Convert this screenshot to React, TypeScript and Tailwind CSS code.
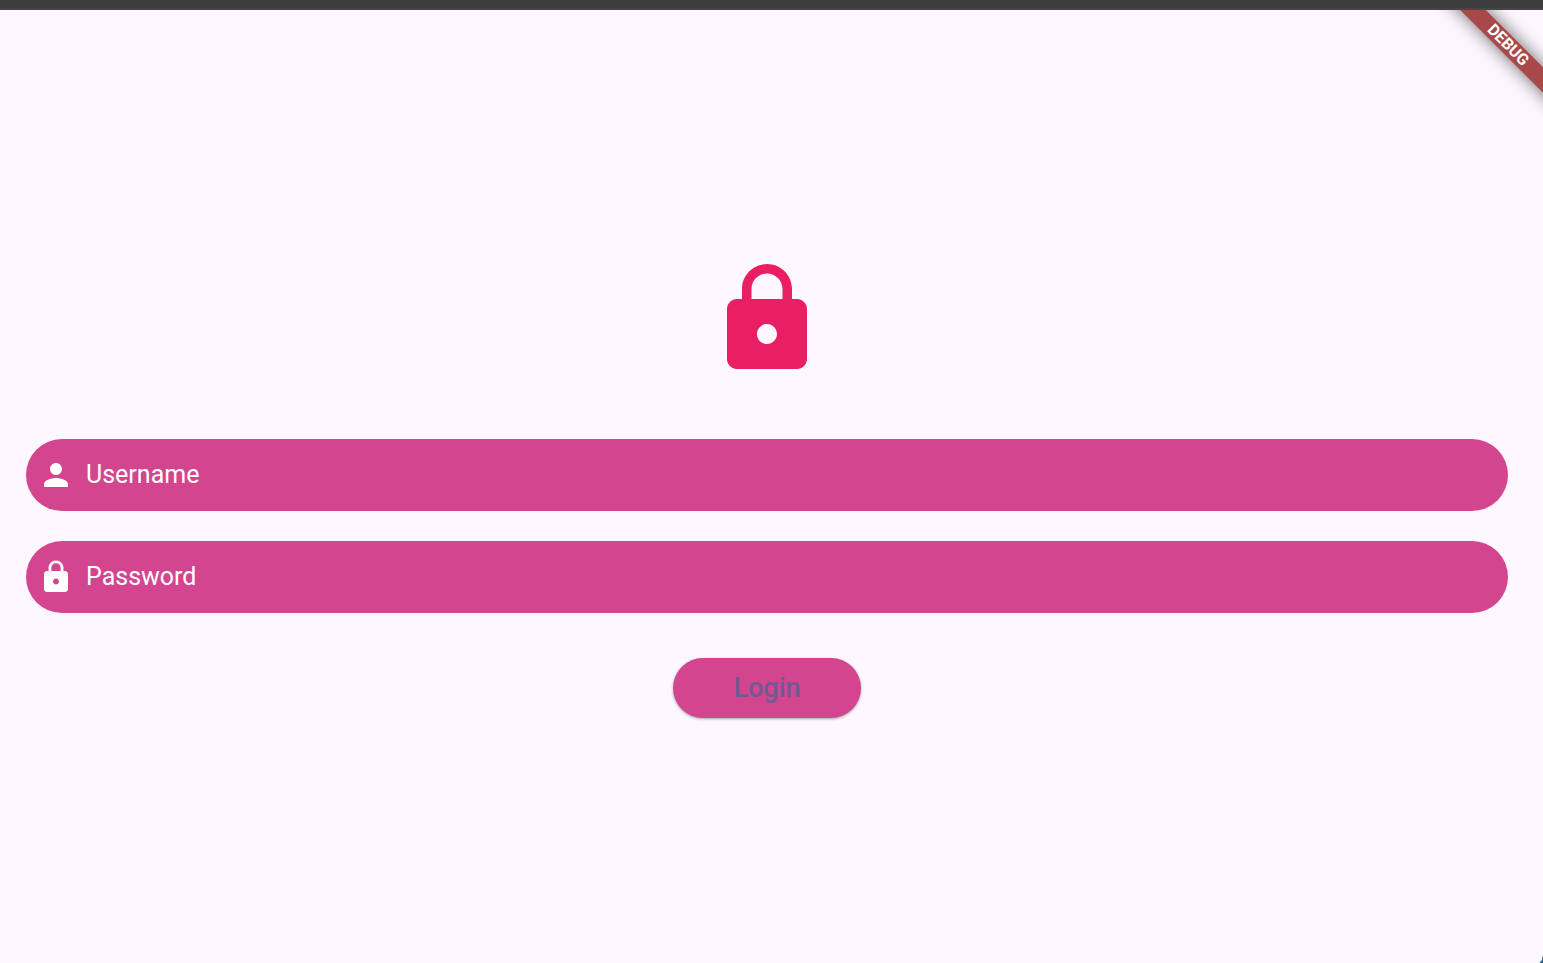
import type { ReactNode } from "react";

const LOCK_PATH =
  "M18 8h-1V6c0-2.76-2.24-5-5-5S7 3.24 7 6v2H6c-1.1 0-2 .9-2 2v10c0 1.1.9 2 2 2h12c1.1 0 2-.9 2-2V10c0-1.1-.9-2-2-2zm-6 9c-1.1 0-2-.9-2-2s.9-2 2-2 2 .9 2 2-.9 2-2 2zm3.1-9H8.9V6c0-1.71 1.39-3.1 3.1-3.1 1.71 0 3.1 1.39 3.1 3.1v2z";
const PERSON_PATH =
  "M12 12c2.21 0 4-1.79 4-4s-1.79-4-4-4-4 1.79-4 4 1.79 4 4 4zm0 2c-2.67 0-8 1.34-8 4v2h16v-2c0-2.66-5.33-4-8-4z";

function Icon({ path, className }: { path: string; className: string }) {
  return (
    <svg viewBox="0 0 24 24" fill="currentColor" aria-hidden="true" className={className}>
      <path d={path} />
    </svg>
  );
}

function Field({ id, type, label, icon }: { id: string; type: string; label: string; icon: ReactNode }) {
  return (
    <div className="flex h-[72px] w-full items-center gap-3 rounded-full bg-[#d3458e] px-3 text-white">
      <label htmlFor={id} aria-label={label} className="shrink-0">
        {icon}
      </label>
      <input
        id={id}
        name={id}
        type={type}
        placeholder={label}
        className="min-w-0 flex-1 bg-transparent text-[25px] text-white outline-none placeholder:text-white placeholder:opacity-100"
      />
    </div>
  );
}

export default function App() {
  return (
    <div className="flex min-h-screen flex-col bg-[#fef7ff] font-['Roboto',sans-serif]">
      <header className="h-[10px] border-b-2 border-[#454545] bg-[#3c3c3c]" />
      <main className="relative flex flex-1 flex-col justify-center pt-1 pr-[35px] pl-[26px]">
        <form className="flex flex-col items-center" onSubmit={(e) => e.preventDefault()}>
          <Icon path={LOCK_PATH} className="mb-15 size-[120px] text-[#e91e63]" />
          <div className="flex w-full flex-col gap-[30px]">
            <Field
              id="username"
              type="text"
              label="Username"
              icon={<Icon path={PERSON_PATH} className="size-9" />}
            />
            <Field
              id="password"
              type="password"
              label="Password"
              icon={<Icon path={LOCK_PATH} className="size-9" />}
            />
          </div>
          <button
            type="submit"
            className="mt-[45px] h-15 rounded-full bg-[#d3458e] px-15 text-[27px] font-medium text-[#6f5a93] shadow-[0_1px_3px_rgba(0,0,0,0.35)]"
          >
            Login
          </button>
        </form>
        <div className="pointer-events-none absolute top-0 right-0 size-28 overflow-hidden">
          <div className="absolute top-[26px] left-[-3px] flex h-[18px] w-40 rotate-45 items-center justify-center bg-[#a94848] text-base font-bold text-white shadow-[0_0_18px_rgba(0,0,0,0.6)]">
            DEBUG
          </div>
        </div>
        <svg viewBox="0 0 3 7" className="absolute right-0 bottom-0 h-[7px] w-[3px]" aria-hidden="true">
          <path d="M3 0v4H2V2z" fill="#555a60" />
          <path d="M3 3v4H0V6l2-2z" fill="#2b6a92" />
        </svg>
      </main>
    </div>
  );
}
